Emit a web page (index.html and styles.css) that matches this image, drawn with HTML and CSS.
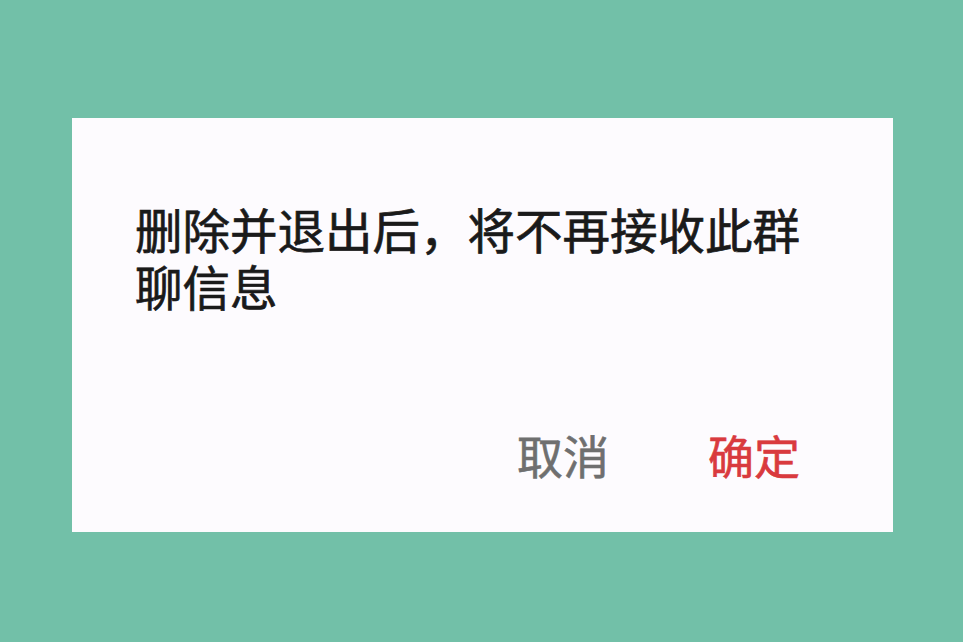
FILE: index.html
```html
<!DOCTYPE html>
<html lang="zh-CN">
<head>
<meta charset="utf-8">
<link rel="stylesheet" href="styles.css">
</head>
<body>
<div class="page">
  <div class="dialog">
    <p class="message">删除并退出后，将不再接收此群聊信息</p>
    <div class="actions">
      <span class="btn cancel">取消</span>
      <span class="btn ok">确定</span>
    </div>
  </div>
</div>
</body>
</html>
```

FILE: styles.css
```css
html, body {
  margin: 0;
  padding: 0;
}
body {
  background: #72c0a8;
  width: 963px;
  height: 642px;
  overflow: hidden;
  font-family: "Noto Sans CJK SC", "Noto Sans", sans-serif;
}
.page {
  padding: 118px 0 0 72px;
}
.dialog {
  box-sizing: border-box;
  width: 821px;
  height: 414px;
  background: #fdfbfe;
  padding: 82px 93px 0 63px;
  display: flex;
  flex-direction: column;
}
.message {
  margin: 0;
  width: 680px;
  font-size: 47.5px;
  line-height: 57px;
  font-weight: 400;
  -webkit-text-stroke: 0.7px currentColor;
  color: #1a1a1a;
}
.actions {
  margin-top: auto;
  margin-bottom: 55px;
  display: flex;
  justify-content: flex-end;
  gap: 99px;
}
.btn {
  font-size: 46px;
  line-height: 46px;
  font-weight: 400;
  -webkit-text-stroke: 0.6px currentColor;
}
.cancel {
  color: #6f6f6f;
}
.ok {
  color: #d93a3e;
}
```
